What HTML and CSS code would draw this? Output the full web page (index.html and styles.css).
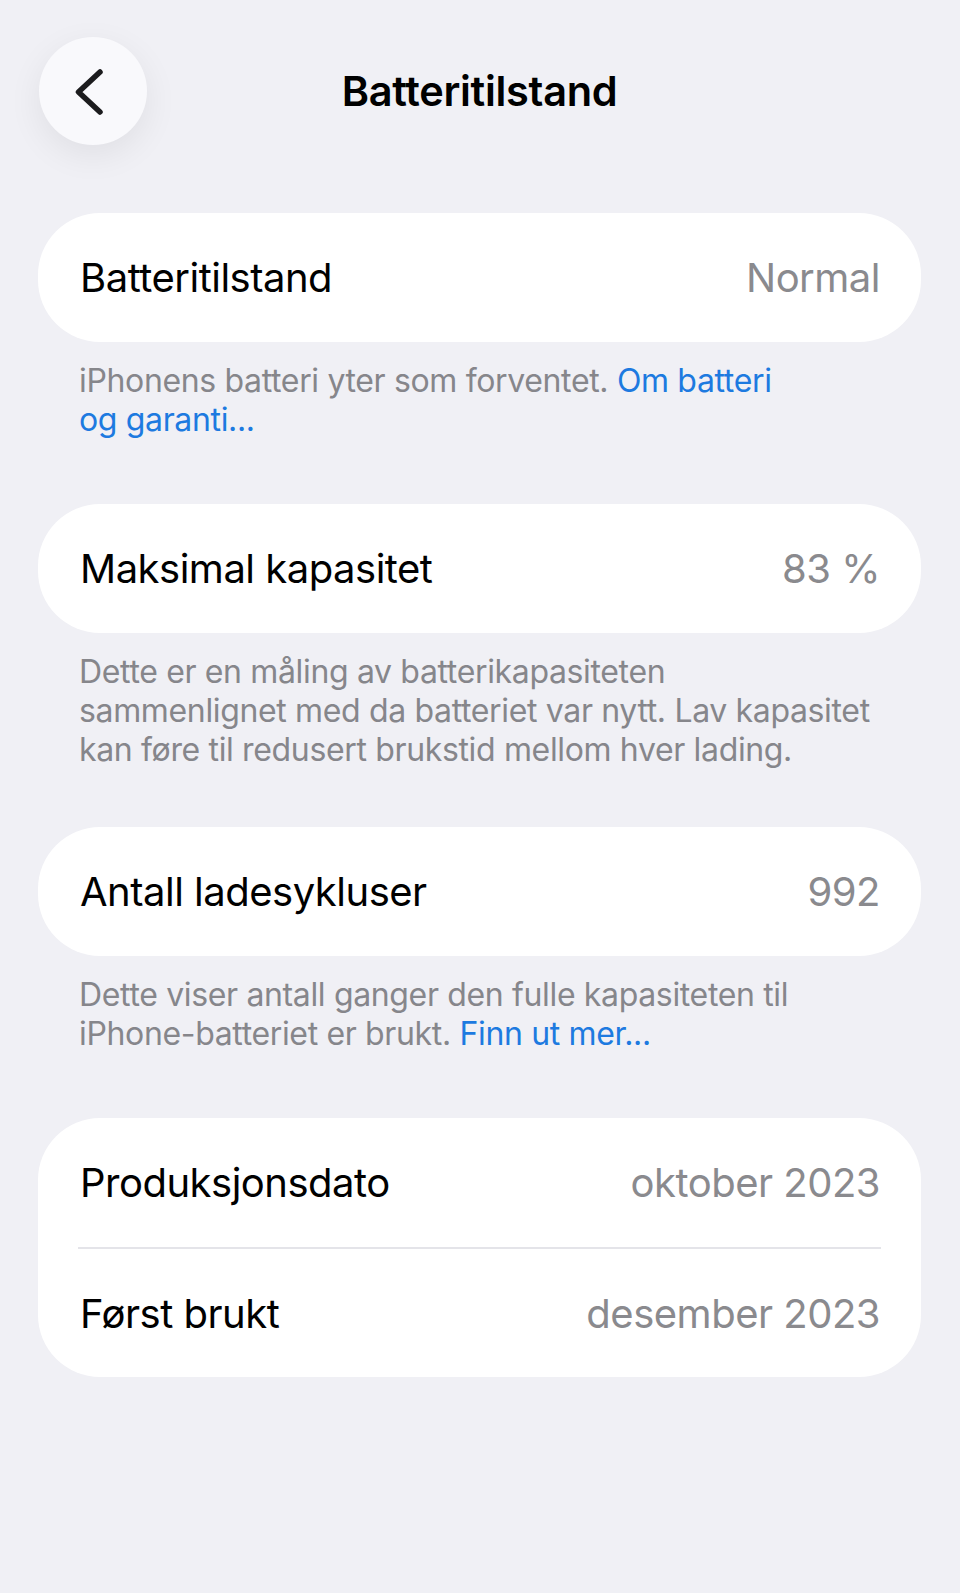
FILE: index.html
```html
<!DOCTYPE html>
<html lang="no">
<head>
<meta charset="utf-8">
<title>Batteritilstand</title>
<link rel="stylesheet" href="styles.css">
</head>
<body>
<div class="page">
  <header class="nav">
    <button class="back" aria-label="Tilbake">
      <svg width="108" height="108" viewBox="0 0 108 108"><path d="M61 35 L39.5 55 L61 75" fill="none" stroke="#1c1c1e" stroke-width="5.5" stroke-linecap="round" stroke-linejoin="round"/></svg>
    </button>
    <h1 class="title">Batteritilstand</h1>
    <span class="spacer"></span>
  </header>

  <section class="group">
    <div class="card">
      <div class="row"><span class="label">Batteritilstand</span><span class="value">Normal</span></div>
    </div>
    <p class="footer">iPhonens batteri yter som forventet. <a class="link">Om batteri<br>og garanti...</a></p>
  </section>

  <section class="group">
    <div class="card">
      <div class="row"><span class="label">Maksimal kapasitet</span><span class="value">83 %</span></div>
    </div>
    <p class="footer footer-3">Dette er en måling av batterikapasiteten<br>sammenlignet med da batteriet var nytt. Lav kapasitet<br>kan føre til redusert brukstid mellom hver lading.</p>
  </section>

  <section class="group">
    <div class="card">
      <div class="row"><span class="label">Antall ladesykluser</span><span class="value">992</span></div>
    </div>
    <p class="footer">Dette viser antall ganger den fulle kapasiteten til<br>iPhone-batteriet er brukt. <a class="link">Finn ut mer...</a></p>
  </section>

  <section class="group">
    <div class="card">
      <div class="row"><span class="label">Produksjonsdato</span><span class="value">oktober 2023</span></div>
      <div class="divider"></div>
      <div class="row"><span class="label">Først brukt</span><span class="value">desember 2023</span></div>
    </div>
  </section>
</div>
</body>
</html>
```

FILE: styles.css
```css
* { box-sizing: border-box; }
html, body {
  margin: 0;
  padding: 0;
  background: #f0f0f5;
}
body {
  font-family: "Inter", "Noto Sans", "Liberation Sans", sans-serif;
  color: #000;
  -webkit-font-smoothing: antialiased;
}
.page {
  width: 960px;
  min-height: 1593px;
  padding: 37px 39px 0 38px;
}
.nav {
  display: grid;
  grid-template-columns: 108px 1fr 108px;
  align-items: center;
  height: 108px;
}
.back {
  width: 108px;
  height: 108px;
  border-radius: 50%;
  border: none;
  padding: 0;
  margin: 0 0 0 1px;
  background: #f9f9fc;
  box-shadow: 0 10px 34px rgba(0, 0, 0, 0.07);
  display: flex;
}
.title {
  margin: 0;
  text-align: center;
  font-size: 41.5px;
  font-weight: 600;
  letter-spacing: -0.3px;
  line-height: 1;
  padding-top: 2px;
}
.group {
  margin-top: 68px;
}
.group + .group {
  margin-top: 0;
}
.card {
  background: #fff;
  border-radius: 62px;
  overflow: hidden;
}
.row {
  height: 129px;
  display: flex;
  align-items: center;
  justify-content: space-between;
  padding: 0 41px 0 42px;
  font-size: 40px;
  letter-spacing: -0.5px;
}
.label { color: #000; }
.value { color: #8a8a8e; }
.divider {
  height: 2px;
  margin: 0 40px 0 40px;
  background: #e4e4e9;
}
.card .divider + .row { height: 128px; }
.footer {
  margin: 0;
  padding: 19px 20px 65px 41px;
  font-size: 32px;
  line-height: 39px;
  color: #86868b;
  letter-spacing: -0.35px;
  white-space: nowrap;
}
.footer-3 {
  padding-bottom: 58px;
}
.link { color: #1d7ae0; }
```
